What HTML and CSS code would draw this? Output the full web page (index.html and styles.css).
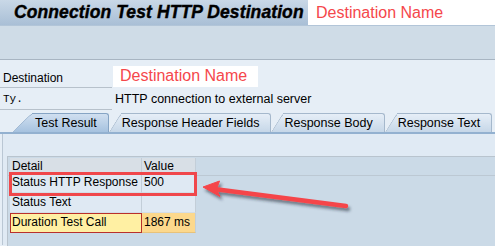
FILE: index.html
```html
<!DOCTYPE html>
<html lang="en">
<head>
  <meta charset="UTF-8">
  <title>Connection Test HTTP Destination</title>
  <link rel="stylesheet" href="styles.css">
</head>

<body>
  <div class="titlebar">
    <h1 class="title">Connection Test HTTP Destination</h1>
    <div class="title-dest">Destination Name</div>
  </div>

  <div class="toolbar"></div>

  <!-- Header fields -->
  <div class="fields">
    <div class="field-row">
      <div class="field-label">Destination</div>
      <div class="field-input">Destination Name</div>
    </div>
    <div class="field-row">
      <div class="field-label mono">Ty.</div>
      <div class="field-value">HTTP connection to external server</div>
    </div>
  </div>

  <!-- Tabs -->
  <div class="tabstrip">
    <div class="tab active">Test Result</div>
    <div class="tab">Response Header Fields</div>
    <div class="tab">Response Body</div>
    <div class="tab">Response Text</div>
  </div>

  <div class="panel">
    <div class="grid-frame">
      <div class="grid">
        <div class="cell head">Detail</div>
        <div class="cell head">Value</div>
        <div class="cell">Status HTTP Response</div>
        <div class="cell">500</div>
        <div class="cell">Status Text</div>
        <div class="cell"></div>
        <div class="cell hl-key">Duration Test Call</div>
        <div class="cell hl-val">1867 ms</div>
      </div>
    </div>
  </div>

  <!-- Annotation -->
  <div class="mark-box"></div>
  <svg class="mark-arrow" width="495" height="246" viewBox="0 0 495 246">
    <defs>
      <filter id="shadow" x="-20%" y="-50%" width="140%" height="200%">
        <feDropShadow dx="2" dy="3" stdDeviation="1.6" flood-color="#1d2a36" flood-opacity="0.55"/>
      </filter>
    </defs>
    <g filter="url(#shadow)" fill="#f5454a" stroke="#f5454a">
      <line x1="214" y1="189" x2="346" y2="206" stroke-width="4.5" stroke-linecap="round"/>
      <polygon points="203,187 219.5,181 216.5,189.5 220,196.5" stroke-width="1" stroke-linejoin="round"/>
    </g>
  </svg>
</body>
</html>
```

FILE: styles.css
```css
body {
  margin: 0;
  width: 495px;
  height: 246px;
  overflow: hidden;
  position: relative;
  background-color: #e6eef6;
  font-family: "Liberation Sans", Arial, sans-serif;
  font-size: 12px;
  color: #000;
}
.titlebar {
  display: flex;
  height: 25px;
  border-bottom: 1px solid #b2c5d8;
}
.title {
  margin: 0;
  width: 294px;
  padding-left: 14px;
  background: linear-gradient(to bottom, #c9d8e7, #a9bfd6);
  font-size: 17.5px;
  font-style: italic;
  font-weight: bold;
  line-height: 25px;
  white-space: nowrap;
  letter-spacing: 0.1px;
  -webkit-text-stroke: 0.4px #000;
}
.title-dest {
  flex: 1;
  background-color: #fff;
  padding-left: 8px;
  color: #f5474b;
  font-size: 16px;
  line-height: 25px;
}
.toolbar {
  height: 33px;
  background-color: #cfdce7;
  border-bottom: 1px solid #a8b5c2;
}
.fields {
  padding-top: 6px;
}
.field-row {
  display: flex;
  height: 22px;
}
.field-label {
  width: 112px;
  padding-left: 3px;
  box-sizing: border-box;
  border-bottom: 1px solid #b7c1cb;
  line-height: 24px;
}
.mono {
  font-family: "Liberation Mono", "Courier New", monospace;
  font-size: 11px;
  line-height: 22px;
}
.field-input {
  width: 138px;
  height: 21px;
  margin-left: 1px;
  padding-left: 7px;
  background-color: #fff;
  color: #f5474b;
  font-size: 16px;
  line-height: 20px;
}
.field-value {
  padding-left: 3px;
  font-size: 12.5px;
  line-height: 22px;
}
.tabstrip {
  display: flex;
  padding: 3px 0 0 12px;
  border-bottom: 2px solid #93b1d0;
}
.tab {
  position: relative;
  margin-left: 12px;
  height: 18px;
  padding: 0 11px 0 1px;
  font-size: 12.5px;
  line-height: 19px;
  white-space: nowrap;
  background: linear-gradient(to bottom, #e6eef7, #c6d7e8);
  border-top: 1px solid #a5b8cc;
  border-right: 1px solid #a5b8cc;
  border-top-right-radius: 3px;
}
.tab::before {
  content: "";
  position: absolute;
  z-index: -1;
  top: -1px;
  bottom: 0;
  left: -12px;
  width: 20px;
  background: linear-gradient(to bottom, #e6eef7, #c6d7e8);
  border-top: 1px solid #a5b8cc;
  border-left: 1px solid #a5b8cc;
  border-top-left-radius: 4px;
  transform-origin: bottom left;
  transform: skewX(-32deg);
}
.tab.active {
  margin-left: 20px;
  padding: 0 11px 0 3px;
  background: linear-gradient(to bottom, #d0dff0, #a6c2df);
  border-color: #86a4c4;
}
.tab.active::before {
  left: -20px;
  width: 28px;
  background: linear-gradient(to bottom, #d0dff0, #a6c2df);
  border-color: #86a4c4;
  transform: skewX(-46deg);
}
.panel {
  margin-left: 2px;
  height: 111px;
  padding-top: 22px;
  box-sizing: border-box;
  background-color: #e0eaf4;
  border-left: 1px solid #bac7d4;
}
.grid-frame {
  margin-left: 4px;
  height: 100%;
  padding: 1px 0 0 2px;
  background: linear-gradient(to bottom, #cbdae7 18px, #bcc8d3 18px, #bcc8d3 19px, #cbdae7 19px);
  border-top: 1px solid #b9c4ce;
  border-left: 1px solid #b9c4ce;
}
.grid {
  display: grid;
  grid-template-columns: 132px 54px;
  grid-template-rows: 15px 20px 20px 20px;
  width: 186px;
}
.cell {
  padding-left: 2px;
  line-height: 19px;
  white-space: nowrap;
  background-color: #dfe9f3;
  border-right: 1px solid #c3ced8;
  border-bottom: 1px solid #d3dde6;
  box-sizing: border-box;
}
.cell.head {
  line-height: 16px;
  background-color: #d8dfe6;
  border-bottom-color: #c6ced6;
}
.cell.hl-key {
  background-color: #fff0a3;
  border: 1px solid #b9302c;
  padding-left: 1px;
  line-height: 17px;
}
.cell.hl-val {
  background-color: #fcd88c;
  border-bottom-color: #e8c27a;
}
.mark-box {
  position: absolute;
  left: 9px;
  top: 172px;
  width: 188px;
  height: 24px;
  box-sizing: border-box;
  border: 3px solid #f0474b;
}
.mark-arrow {
  position: absolute;
  left: 0;
  top: 0;
  pointer-events: none;
}
```
